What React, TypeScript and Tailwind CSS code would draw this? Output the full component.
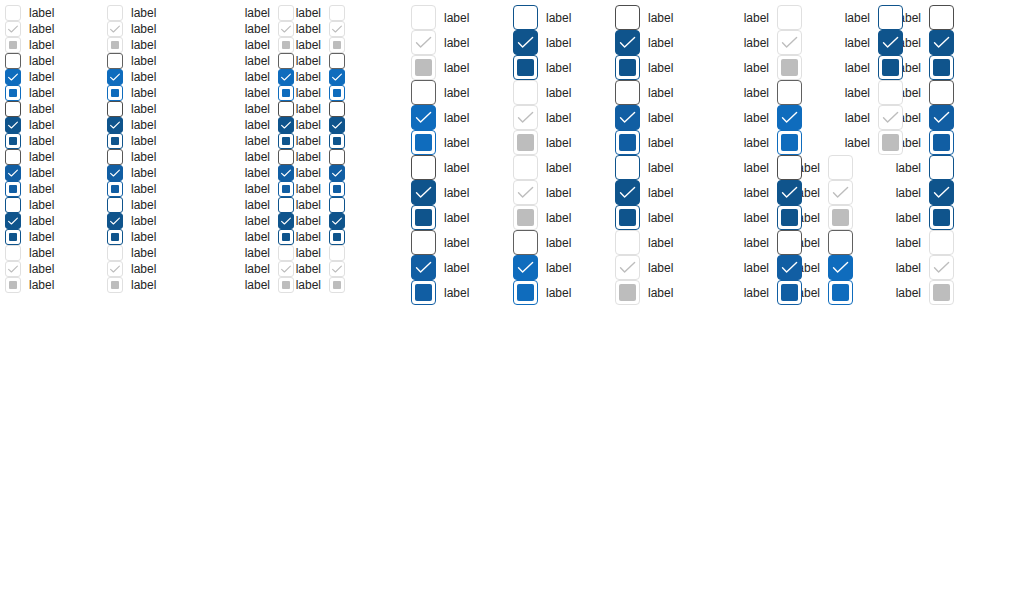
import React from "react";

type V = "D" | "R" | "P" | "H" | "B";
type S = "u" | "c" | "i";

const uncheckedBorder: Record<V, string> = {
  D: "border-[#e0e0e0]",
  R: "border-[#616161]",
  H: "border-[#575757]",
  P: "border-[#4d4d4d]",
  B: "border-[#0f548c]",
};

const filled: Record<V, string> = {
  D: "bg-white border-[#e0e0e0]",
  R: "bg-[#0f6cbd] border-[#0f6cbd]",
  H: "bg-[#115ea3] border-[#115ea3]",
  P: "bg-[#0f548c] border-[#0f548c]",
  B: "bg-[#0f548c] border-[#0f548c]",
};

const indetBorder: Record<V, string> = {
  D: "border-[#e0e0e0]",
  R: "border-[#0f6cbd]",
  H: "border-[#115ea3]",
  P: "border-[#0f548c]",
  B: "border-[#0f548c]",
};

const square: Record<V, string> = {
  D: "bg-[#bdbdbd]",
  R: "bg-[#0f6cbd]",
  H: "bg-[#115ea3]",
  P: "bg-[#0f548c]",
  B: "bg-[#0f548c]",
};

function Box({ v, s, large }: { v: V; s: S; large: boolean }) {
  const size = large ? "w-[25px] h-[25px] rounded-[4px]" : "w-4 h-4 rounded-[3px]";
  let cls = "";
  if (s === "u") cls = "bg-white " + uncheckedBorder[v];
  else if (s === "c") cls = filled[v];
  else cls = "bg-white " + indetBorder[v];
  const stroke = v === "D" ? "#bdbdbd" : "#ffffff";
  return (
    <div className={`relative shrink-0 box-border border flex items-center justify-center ${size} ${cls}`}>
      {s === "c" &&
        (large ? (
          <svg width="25" height="25" viewBox="0 0 25 25" className="absolute -left-px -top-px">
            <path d="M5.5 12.8 L9.6 16.9 L19.6 7.4" fill="none" stroke={stroke} strokeWidth="1.4" strokeLinecap="round" strokeLinejoin="round" />
          </svg>
        ) : (
          <svg width="16" height="16" viewBox="0 0 16 16" className="absolute -left-px -top-px">
            <path d="M3.6 8.3 L6.4 11 L12.4 5.2" fill="none" stroke={stroke} strokeWidth="1.1" strokeLinecap="round" strokeLinejoin="round" />
          </svg>
        ))}
      {s === "i" && (
        <div className={`${large ? "w-[17px] h-[17px] rounded-[2px]" : "w-2 h-2 rounded-[1px]"} ${square[v]}`} />
      )}
    </div>
  );
}

function Item({ v, s, large, left, extra = "" }: { v: V; s: S; large: boolean; left: boolean; extra?: string }) {
  const h = large ? "h-[25px]" : "h-4";
  const label = <span className="whitespace-nowrap leading-none">label</span>;
  return (
    <div className={`flex items-center gap-2 ${h} ${extra}`}>
      {left && label}
      <Box v={v} s={s} large={large} />
      {!left && label}
    </div>
  );
}

const states: S[] = ["u", "c", "i"];

function Column({ seq, large, left, width, splitShift }: { seq: V[]; large: boolean; left: boolean; width: string; splitShift?: boolean }) {
  const items: React.ReactNode[] = [];
  seq.forEach((v, gi) =>
    states.forEach((s, si) => {
      const idx = gi * 3 + si;
      const extra = splitShift && idx >= 6 ? "mr-[50px]" : "";
      items.push(<Item key={idx} v={v} s={s} large={large} left={left} extra={extra} />);
    })
  );
  return <div className={`flex flex-col ${left ? "items-end" : "items-start"} ${width}`}>{items}</div>;
}

export default function App() {
  const small: V[] = ["D", "R", "P", "H", "B", "D"];
  const c1: V[] = ["D", "R", "P", "H"];
  const c2: V[] = ["B", "D", "D", "R"];
  const c3: V[] = ["P", "H", "B", "D"];
  return (
    <div className="w-[1010px] h-[610px] bg-white flex items-start pt-[5px] pl-[5px] font-['Liberation_Sans',Arial,sans-serif] text-[12px] text-[#242424]">
      <div className="flex items-start">
        <Column seq={small} large={false} left={false} width="w-[102px]" />
        <Column seq={small} large={false} left={false} width="w-[102px]" />
        <Column seq={small} large={false} left={true} width="w-[85px]" />
        <Column seq={small} large={false} left={true} width="w-[51px]" />
      </div>
      <div className="flex items-start ml-[66px]">
        <Column seq={c1} large={true} left={false} width="w-[102px]" />
        <Column seq={c2} large={true} left={false} width="w-[102px]" />
        <Column seq={c3} large={true} left={false} width="w-[102px]" />
        <Column seq={c1} large={true} left={true} width="w-[85px]" />
        <Column seq={c2} large={true} left={true} width="w-[101px]" splitShift />
        <Column seq={c3} large={true} left={true} width="w-[51px]" />
      </div>
    </div>
  );
}
